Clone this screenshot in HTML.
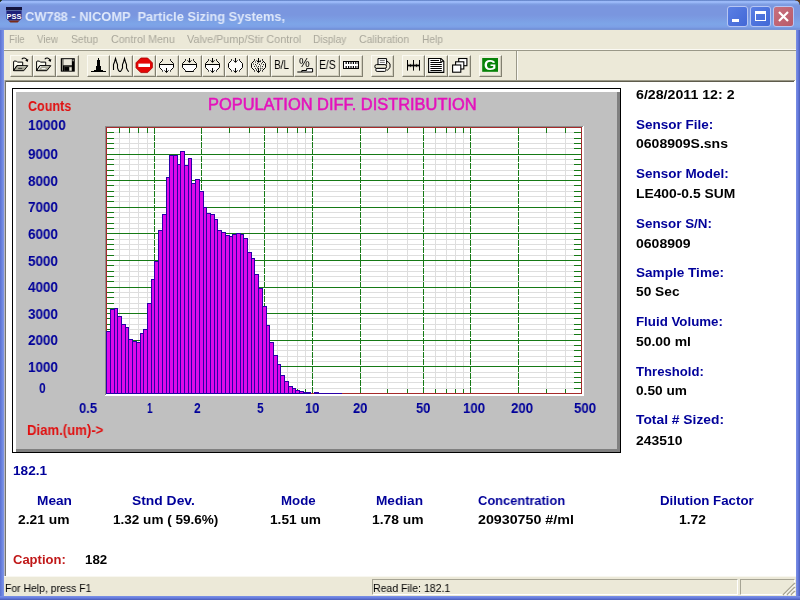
<!DOCTYPE html>
<html><head><meta charset="utf-8"><title>CW788</title><style>
html,body{margin:0;padding:0;}
body{width:800px;height:600px;overflow:hidden;position:relative;background:#fff;font-family:"Liberation Sans", sans-serif;}
.abs{position:absolute;}
.t{position:absolute;white-space:nowrap;line-height:normal;transform-origin:0 0;font-family:"Liberation Sans", sans-serif;will-change:transform;}
.btn{position:absolute;top:55px;width:23px;height:22px;box-sizing:border-box;background:#efecdd;
 border-top:1px solid #fbfaf2;border-left:1px solid #fbfaf2;border-right:1px solid #817f70;border-bottom:1px solid #817f70;
 box-shadow:inset -1px -1px 0 #d2cfbe;}
</style></head><body>
<div class="abs" style="left:0;top:0;width:800px;height:600px;background:#6f84dc;"></div>
<div class="abs" style="left:0;top:0;width:800px;height:30px;background:linear-gradient(#6888cc 0,#6c8cd0 0.6px,#9bb9f8 1.4px,#98b6f6 2.6px,#80a0e4 4px,#7a96df 6px,#7a96df 15px,#7da5e8 24px,#7da0e6 27px,#7090da 29px,#8298cc 30px);"></div>
<div class="abs" style="left:0;top:30px;width:4px;height:570px;background:linear-gradient(90deg,#5a70d0,#6c84e0 2px,#7f96e6);"></div>
<div class="abs" style="left:796px;top:30px;width:4px;height:570px;background:linear-gradient(90deg,#7c90e2,#657be0 2px,#4a5cb4);"></div>
<div class="abs" style="left:0;top:596px;width:800px;height:4px;background:linear-gradient(#7c92e4,#657be0 2px,#4a5cb4);"></div>
<div class="abs" style="left:0;top:0;width:3px;height:3px;background:radial-gradient(circle at 100% 100%,transparent 2.6px,#1c2a14 3px);"></div>
<div class="abs" style="left:795px;top:0;width:5px;height:5px;background:radial-gradient(circle at 0 100%,transparent 4.2px,#5a3a1c 5px);"></div>
<div class="abs" style="left:4px;top:30px;width:792px;height:52px;background:#ece9d8;"></div>
<div class="abs" style="left:4px;top:49px;width:792px;height:1px;background:#fbfaf4;"></div>
<div class="abs" style="left:4px;top:50px;width:792px;height:1px;background:#9a9888;"></div>
<div class="abs" style="left:516px;top:51px;width:1px;height:29px;background:#9a9888;"></div>
<div class="abs" style="left:517px;top:51px;width:1px;height:29px;background:#fbfaf4;"></div>
<div class="abs" style="left:4px;top:80px;width:792px;height:496px;background:#fff;"></div>
<div class="abs" style="left:4px;top:80px;width:791px;height:1px;background:#9a9886;"></div>
<div class="abs" style="left:4px;top:81px;width:790px;height:1px;background:#5e5c4c;"></div>
<div class="abs" style="left:4px;top:80px;width:1px;height:496px;background:#b8b8c8;"></div>
<div class="abs" style="left:5px;top:81px;width:1px;height:495px;background:#77766a;"></div>
<div class="abs" style="left:4px;top:576px;width:792px;height:20px;background:#ece9d8;"></div>
<div class="abs" style="left:4px;top:576px;width:792px;height:1px;background:#f8f7f0;"></div>
<div class="abs" style="left:372px;top:579px;width:366px;height:16px;box-sizing:border-box;border-top:1px solid #a6a494;border-left:1px solid #a6a494;border-right:1px solid #fff;border-bottom:1px solid #fff;"></div>
<div class="abs" style="left:740px;top:579px;width:55px;height:16px;box-sizing:border-box;border-top:1px solid #a6a494;border-left:1px solid #a6a494;border-right:1px solid #fff;border-bottom:1px solid #fff;"></div>
<svg class="abs" style="left:780px;top:580px" width="16" height="16"><path d="M15 3 L3 15 M15 7 L7 15 M15 11 L11 15" stroke="#a9a694" stroke-width="1.6"/><path d="M15 4.4 L4.4 15 M15 8.4 L8.4 15 M15 12.4 L12.4 15" stroke="#fff" stroke-width="1"/></svg>
<svg class="abs" style="left:5px;top:6.4px" width="18" height="18"><rect x="1" y="1" width="16" height="3.4" fill="#14143c"/><path d="M1.4 5 L16.6 5 L16.6 12.4 L14.6 14.6 L3.4 14.6 L1.4 12.4 Z" fill="#1e2078"/><path d="M3.4 14.6 L14.6 14.6 L12.6 16.6 L5.4 16.6 Z" fill="#7a2a18"/><text x="9" y="12.6" font-family="Liberation Sans, sans-serif" font-size="7.4" font-weight="bold" fill="#fff" text-anchor="middle">PSS</text></svg>
<div class="abs" style="left:727px;top:6px;width:21px;height:21px;box-sizing:border-box;border:1px solid #b7c6f3;border-radius:3px;background:linear-gradient(135deg,#5a7fe4,#4268d6);"></div><div class="abs" style="left:732px;top:19px;width:7px;height:3px;background:#fff;"></div>
<div class="abs" style="left:750px;top:6px;width:21px;height:21px;box-sizing:border-box;border:1px solid #b7c6f3;border-radius:3px;background:linear-gradient(135deg,#5a7fe4,#4268d6);"></div><div class="abs" style="left:755px;top:11px;width:11px;height:10px;box-sizing:border-box;border:1px solid #fff;border-top:3px solid #fff;"></div>
<div class="abs" style="left:773px;top:6px;width:21px;height:21px;box-sizing:border-box;border:1px solid #b7c6f3;border-radius:3px;background:linear-gradient(135deg,#c8707e,#b85a6a);"></div><svg class="abs" style="left:773px;top:6px" width="21" height="21"><path d="M6 6 L15 15 M15 6 L6 15" stroke="#fff" stroke-width="2.2"/></svg>
<div class="btn" style="left:10px"></div><div class="btn" style="left:33px"></div><div class="btn" style="left:56px"></div><div class="btn" style="left:87px"></div><div class="btn" style="left:110px"></div><div class="btn" style="left:133px"></div><div class="btn" style="left:156px"></div><div class="btn" style="left:179px"></div><div class="btn" style="left:202px"></div><div class="btn" style="left:225px"></div><div class="btn" style="left:248px"></div><div class="btn" style="left:271px"></div><div class="btn" style="left:294px"></div><div class="btn" style="left:317px"></div><div class="btn" style="left:340px"></div><div class="btn" style="left:371px"></div><div class="btn" style="left:402px"></div><div class="btn" style="left:425px"></div><div class="btn" style="left:448px"></div><div class="btn" style="left:479px"></div>
<svg class="abs" style="left:0;top:0" width="800" height="90"><g transform="translate(13,57)"><path d="M0.6 13.7 L0.6 4.5 L1 4.1 L3.4 4.1 L4.4 5.1 L9.7 5.1 L9.7 8.7 L3.8 8.7 Z" fill="#fffff4" stroke="#000" stroke-width="1"/><path d="M0.6 13.7 L3.9 8.7 L14.8 8.7 L10.8 13.7 Z" fill="#a6a695" stroke="#000" stroke-width="1"/><path d="M4.8 9.7 L12.8 9.7" stroke="#d8d8ca" stroke-width="0.8"/><path d="M8.8 2.2 C10 0.5 12.8 0.3 14 3.2" fill="none" stroke="#000" stroke-width="1.1"/><path d="M12.2 3.6 L14.7 4.9 L15.3 1.9 Z" fill="#000"/><path d="M5.2 11.4 L9.2 11.4" stroke="#333" stroke-width="1"/></g><g transform="translate(36,57)"><path d="M0.6 13.7 L0.6 4.5 L1 4.1 L3.4 4.1 L4.4 5.1 L9.7 5.1 L9.7 8.7 L3.8 8.7 Z" fill="#fffff4" stroke="#000" stroke-width="1"/><path d="M0.6 13.7 L3.9 8.7 L14.8 8.7 L10.8 13.7 Z" fill="#a6a695" stroke="#000" stroke-width="1"/><path d="M4.8 9.7 L12.8 9.7" stroke="#d8d8ca" stroke-width="0.8"/><path d="M8.8 2.2 C10 0.5 12.8 0.3 14 3.2" fill="none" stroke="#000" stroke-width="1.1"/><path d="M12.2 3.6 L14.7 4.9 L15.3 1.9 Z" fill="#000"/><path d="M2.4 12.6 L5 9" stroke="#fff" stroke-width="1"/><path d="M5.6 11.6 L9.6 11.6" stroke="#fff" stroke-width="1"/></g><g transform="translate(60.8,58.2) scale(0.97,0.96)"><rect x="0" y="0" width="14.4" height="14" fill="#000"/><rect x="2.6" y="1" width="8.8" height="6.4" fill="#e9e7da"/><rect x="1.2" y="1" width="1" height="12" fill="#8c8c80"/><rect x="12.2" y="1.4" width="1" height="1.8" fill="#e9e7da"/><rect x="3.4" y="8.8" width="8" height="4.4" fill="#8c8c80"/><rect x="3.6" y="9.2" width="5" height="4" fill="#000"/><rect x="9" y="9.6" width="2" height="3.2" fill="#e9e7da"/></g><rect x="98" y="58" width="1" height="2" fill="#000"/><rect x="97" y="60" width="3" height="6" fill="#000"/><rect x="96" y="66" width="5" height="4" fill="#000"/><rect x="94" y="70" width="9" height="1" fill="#000"/><rect x="91" y="71" width="15" height="1" fill="#000"/><path d="M113.5 70 L113.5 64.5 L114.5 62 L115.5 58.5 L116.5 62 L117.5 64.5 L117.5 68 L118.5 70.5 L119.5 71.5 L120.5 71.5 L121.5 70 L122.5 68 L122.5 64.5 L123.5 62 L124.5 58.5 L125.5 62 L126.5 64.5 L126.5 68 L127.5 70 L128.7 71.7" fill="none" stroke="#000" stroke-width="1.1"/><path d="M140.8 58 L147.6 58 L152.4 62.8 L152.4 67.8 L147.6 72.6 L140.8 72.6 L136 67.8 L136 62.8 Z" fill="#e40606" stroke="#a80000" stroke-width="0.8"/><rect x="138.4" y="63.6" width="11.6" height="3.4" fill="#fff"/><path d="M159.5 64.5 L159.5 67.5 L162.9 71.4 L170.1 71.4 L173.5 67.5 L173.5 64.5 Z" fill="#fdfdfd"/><path d="M162.5 59.2 L162.5 60.5 L159.5 63.5 L159.5 67.5 L162.5 70.5 L162.5 71.6" fill="none" stroke="#000" stroke-width="1"/><path d="M170.5 59.2 L170.5 60.5 L173.5 63.5 L173.5 67.5 L170.5 70.5 L170.5 71.6" fill="none" stroke="#000" stroke-width="1"/><path d="M159.5 64.5 L173.5 64.5" fill="none" stroke="#000" stroke-width="1"/><path d="M166.5 68 L166.5 72.6 M164.5 70.4 L166.5 72.4 L168.5 70.4" fill="none" stroke="#000" stroke-width="1"/><path d="M182.5 64.5 L182.5 67.5 L185.9 71.4 L193.1 71.4 L196.5 67.5 L196.5 64.5 Z" fill="#fdfdfd"/><path d="M185.5 59.2 L185.5 60.5 L182.5 63.5 L182.5 67.5 L185.5 70.5 L185.5 71.6" fill="none" stroke="#000" stroke-width="1"/><path d="M193.5 59.2 L193.5 60.5 L196.5 63.5 L196.5 67.5 L193.5 70.5 L193.5 71.6" fill="none" stroke="#000" stroke-width="1"/><path d="M182.5 64.5 L196.5 64.5" fill="none" stroke="#000" stroke-width="1"/><path d="M185.5 71.5 L193.5 71.5" fill="none" stroke="#000" stroke-width="1"/><path d="M189.5 58 L189.5 62.4 M187.5 60.3 L189.5 62.3 L191.5 60.3" fill="none" stroke="#000" stroke-width="1"/><path d="M205.5 64.5 L205.5 67.5 L208.9 71.4 L216.1 71.4 L219.5 67.5 L219.5 64.5 Z" fill="#fdfdfd"/><path d="M208.5 59.2 L208.5 60.5 L205.5 63.5 L205.5 67.5 L208.5 70.5 L208.5 71.6" fill="none" stroke="#000" stroke-width="1"/><path d="M216.5 59.2 L216.5 60.5 L219.5 63.5 L219.5 67.5 L216.5 70.5 L216.5 71.6" fill="none" stroke="#000" stroke-width="1"/><path d="M205.5 64.5 L219.5 64.5" fill="none" stroke="#000" stroke-width="1"/><path d="M212.5 58 L212.5 62.4 M210.5 60.3 L212.5 62.3 L214.5 60.3" fill="none" stroke="#000" stroke-width="1"/><path d="M212.5 68 L212.5 72.6 M210.5 70.4 L212.5 72.4 L214.5 70.4" fill="none" stroke="#000" stroke-width="1"/><path d="M231.5 60 L228.5 63.5 L228.5 67.5 L231.5 71 L239.5 71 L242.5 67.5 L242.5 63.5 L239.5 60 Z" fill="#fdfdfd"/><path d="M231.5 59.2 L231.5 60.5 L228.5 63.5 L228.5 67.5 L231.5 70.5 L231.5 71.6" fill="none" stroke="#000" stroke-width="1"/><path d="M239.5 59.2 L239.5 60.5 L242.5 63.5 L242.5 67.5 L239.5 70.5 L239.5 71.6" fill="none" stroke="#000" stroke-width="1"/><path d="M235.5 58 L235.5 62.4 M233.5 60.3 L235.5 62.3 L237.5 60.3" fill="none" stroke="#000" stroke-width="1"/><path d="M235.5 68 L235.5 72.6 M233.5 70.4 L235.5 72.4 L237.5 70.4" fill="none" stroke="#000" stroke-width="1"/><path d="M254.5 60 L251.5 63.5 L251.5 67.5 L254.5 71 L262.5 71 L265.5 67.5 L265.5 63.5 L262.5 60 Z" fill="#f4f2e8"/><path d="M254.5 59.2 L254.5 60.5 L251.5 63.5 L251.5 67.5 L254.5 70.5 L254.5 71.6" fill="none" stroke="#000" stroke-width="1"/><path d="M262.5 59.2 L262.5 60.5 L265.5 63.5 L265.5 67.5 L262.5 70.5 L262.5 71.6" fill="none" stroke="#000" stroke-width="1"/><path d="M258.5 58 L258.5 62.4 M256.5 60.3 L258.5 62.3 L260.5 60.3" fill="none" stroke="#000" stroke-width="1"/><path d="M258.5 68 L258.5 72.6 M256.5 70.4 L258.5 72.4 L260.5 70.4" fill="none" stroke="#000" stroke-width="1"/><rect x="255.0" y="61.5" width="1" height="1" fill="#111"/><rect x="257.0" y="60.9" width="1" height="1" fill="#111"/><rect x="260.0" y="61.1" width="1" height="1" fill="#111"/><rect x="262.0" y="61.9" width="1" height="1" fill="#111"/><rect x="253.0" y="63.5" width="1" height="1" fill="#111"/><rect x="255.0" y="64.1" width="1" height="1" fill="#111"/><rect x="257.0" y="63.1" width="1" height="1" fill="#111"/><rect x="259.0" y="63.9" width="1" height="1" fill="#111"/><rect x="261.0" y="63.3" width="1" height="1" fill="#111"/><rect x="263.0" y="64.1" width="1" height="1" fill="#111"/><rect x="254.0" y="65.9" width="1" height="1" fill="#111"/><rect x="256.0" y="65.5" width="1" height="1" fill="#111"/><rect x="258.0" y="66.1" width="1" height="1" fill="#111"/><rect x="260.0" y="65.5" width="1" height="1" fill="#111"/><rect x="262.0" y="66.1" width="1" height="1" fill="#111"/><rect x="255.0" y="67.9" width="1" height="1" fill="#111"/><rect x="257.0" y="67.5" width="1" height="1" fill="#111"/><rect x="260.0" y="67.7" width="1" height="1" fill="#111"/><rect x="261.6" y="68.1" width="1" height="1" fill="#111"/><rect x="256.0" y="69.3" width="1" height="1" fill="#111"/><rect x="260.0" y="69.5" width="1" height="1" fill="#111"/><path d="M297.3 72 L301.8 72 L301.8 70.5 L306.6 70.5 L306.6 68.6 L312.6 68.6 L312.6 72 L301.8 72" fill="#fdfdfd" stroke="#000" stroke-width="1"/><rect x="343.5" y="61.5" width="15" height="7" fill="#fff" stroke="#000" stroke-width="1"/><rect x="345.6" y="62" width="1.2" height="2" fill="#000"/><rect x="345.6" y="66" width="1.2" height="2" fill="#000"/><rect x="348.0" y="62" width="1.2" height="2" fill="#000"/><rect x="348.0" y="66" width="1.2" height="2" fill="#000"/><rect x="350.4" y="62" width="1.2" height="2" fill="#000"/><rect x="350.4" y="66" width="1.2" height="2" fill="#000"/><rect x="352.8" y="62" width="1.2" height="2" fill="#000"/><rect x="352.8" y="66" width="1.2" height="2" fill="#000"/><rect x="355.2" y="62" width="1.2" height="2" fill="#000"/><rect x="355.2" y="66" width="1.2" height="2" fill="#000"/><rect x="357.6" y="62" width="1.2" height="2" fill="#000"/><rect x="357.6" y="66" width="1.2" height="2" fill="#000"/><g transform="translate(374.4,58)"><path d="M3.6 6.6 L3.6 0.6 L12.2 0.6 L12.2 6.6" fill="#fff" stroke="#000" stroke-width="1"/><path d="M5.4 2.5 L10.4 2.5 M5.4 4.4 L10.4 4.4" stroke="#666" stroke-width="0.9"/><rect x="0.5" y="6.6" width="11.6" height="3.8" rx="1.6" fill="#ecead8" stroke="#000" stroke-width="1"/><rect x="1.4" y="10.4" width="10.2" height="3" rx="1.3" fill="#fff" stroke="#000" stroke-width="1"/><path d="M12.4 3.6 L13.6 3.6 L15.6 6 L15.6 9.6 L12.8 12.4" fill="none" stroke="#000" stroke-width="1"/></g><rect x="407" y="60" width="1" height="10.6" fill="#000"/><rect x="413" y="60" width="1" height="10.6" fill="#000"/><rect x="419" y="60" width="1" height="10.6" fill="#000"/><rect x="407" y="65" width="13" height="1" fill="#000"/><rect x="408.6" y="63.9" width="0.8" height="3.2" fill="#000"/><rect x="410.1" y="63.9" width="0.8" height="3.2" fill="#000"/><rect x="411.6" y="63.9" width="0.8" height="3.2" fill="#000"/><rect x="414.6" y="63.9" width="0.8" height="3.2" fill="#000"/><rect x="416.1" y="63.9" width="0.8" height="3.2" fill="#000"/><rect x="417.6" y="63.9" width="0.8" height="3.2" fill="#000"/><path d="M428.6 58.5 L441 58.5 L443.8 61.3 L443.8 72.4 L428.6 72.4 Z" fill="#fff" stroke="#000" stroke-width="1.1"/><path d="M440.6 58.5 L440.6 61.6 L443.8 61.6" fill="none" stroke="#000" stroke-width="0.9"/><rect x="430.4" y="60" width="8.6" height="1" fill="#000"/><rect x="430.4" y="62" width="11.4" height="1" fill="#000"/><rect x="430.4" y="64" width="11.4" height="1" fill="#000"/><rect x="430.4" y="66" width="11.4" height="1" fill="#000"/><rect x="430.4" y="68" width="11.4" height="1" fill="#000"/><rect x="430.4" y="70" width="11.4" height="1" fill="#000"/><rect x="458.7" y="58.5" width="8.2" height="7.2" fill="#fff" stroke="#000" stroke-width="1.1"/><rect x="455.6" y="61.8" width="8.2" height="7.2" fill="#fff" stroke="#000" stroke-width="1.1"/><rect x="452.6" y="65" width="8.2" height="7.2" fill="#fff" stroke="#000" stroke-width="1.1"/><rect x="482.2" y="58" width="15.8" height="13.8" fill="#078207"/></svg>
<div class="abs" style="left:12px;top:88px;width:609px;height:365px;background:#000;"></div>
<div class="abs" style="left:13px;top:89px;width:607px;height:363px;background:#fff;"></div>
<div class="abs" style="left:16px;top:92px;width:604px;height:360px;background:#808080;"></div>
<div class="abs" style="left:16px;top:92px;width:601px;height:357px;background:#c0c0c0;"></div>
<svg class="abs" style="left:0;top:0" width="800" height="600" shape-rendering="crispEdges"><rect x="105" y="126" width="479" height="270" fill="#ffffff"/><rect x="105" y="126" width="478" height="1" fill="#8c8c8c"/><rect x="105" y="126" width="1" height="269" fill="#8c8c8c"/><rect x="107" y="388" width="474" height="1" fill="#dedede"/><rect x="107" y="382" width="474" height="1" fill="#dedede"/><rect x="107" y="377" width="474" height="1" fill="#dedede"/><rect x="107" y="372" width="474" height="1" fill="#dedede"/><rect x="107" y="361" width="474" height="1" fill="#dedede"/><rect x="107" y="356" width="474" height="1" fill="#dedede"/><rect x="107" y="350" width="474" height="1" fill="#dedede"/><rect x="107" y="345" width="474" height="1" fill="#dedede"/><rect x="107" y="334" width="474" height="1" fill="#dedede"/><rect x="107" y="329" width="474" height="1" fill="#dedede"/><rect x="107" y="324" width="474" height="1" fill="#dedede"/><rect x="107" y="318" width="474" height="1" fill="#dedede"/><rect x="107" y="308" width="474" height="1" fill="#dedede"/><rect x="107" y="303" width="474" height="1" fill="#dedede"/><rect x="107" y="297" width="474" height="1" fill="#dedede"/><rect x="107" y="292" width="474" height="1" fill="#dedede"/><rect x="107" y="281" width="474" height="1" fill="#dedede"/><rect x="107" y="276" width="474" height="1" fill="#dedede"/><rect x="107" y="271" width="474" height="1" fill="#dedede"/><rect x="107" y="265" width="474" height="1" fill="#dedede"/><rect x="107" y="255" width="474" height="1" fill="#dedede"/><rect x="107" y="249" width="474" height="1" fill="#dedede"/><rect x="107" y="244" width="474" height="1" fill="#dedede"/><rect x="107" y="239" width="474" height="1" fill="#dedede"/><rect x="107" y="228" width="474" height="1" fill="#dedede"/><rect x="107" y="223" width="474" height="1" fill="#dedede"/><rect x="107" y="217" width="474" height="1" fill="#dedede"/><rect x="107" y="212" width="474" height="1" fill="#dedede"/><rect x="107" y="201" width="474" height="1" fill="#dedede"/><rect x="107" y="196" width="474" height="1" fill="#dedede"/><rect x="107" y="191" width="474" height="1" fill="#dedede"/><rect x="107" y="185" width="474" height="1" fill="#dedede"/><rect x="107" y="175" width="474" height="1" fill="#dedede"/><rect x="107" y="170" width="474" height="1" fill="#dedede"/><rect x="107" y="164" width="474" height="1" fill="#dedede"/><rect x="107" y="159" width="474" height="1" fill="#dedede"/><rect x="107" y="148" width="474" height="1" fill="#dedede"/><rect x="107" y="143" width="474" height="1" fill="#dedede"/><rect x="107" y="138" width="474" height="1" fill="#dedede"/><rect x="107" y="132" width="474" height="1" fill="#dedede"/><rect x="119" y="128" width="1" height="265" fill="#dedede"/><rect x="129" y="128" width="1" height="265" fill="#dedede"/><rect x="138" y="128" width="1" height="265" fill="#dedede"/><rect x="147" y="128" width="1" height="265" fill="#dedede"/><rect x="229" y="128" width="1" height="265" fill="#dedede"/><rect x="249" y="128" width="1" height="265" fill="#dedede"/><rect x="277" y="128" width="1" height="265" fill="#dedede"/><rect x="287" y="128" width="1" height="265" fill="#dedede"/><rect x="297" y="128" width="1" height="265" fill="#dedede"/><rect x="305" y="128" width="1" height="265" fill="#dedede"/><rect x="387" y="128" width="1" height="265" fill="#dedede"/><rect x="407" y="128" width="1" height="265" fill="#dedede"/><rect x="435" y="128" width="1" height="265" fill="#dedede"/><rect x="446" y="128" width="1" height="265" fill="#dedede"/><rect x="455" y="128" width="1" height="265" fill="#dedede"/><rect x="463" y="128" width="1" height="265" fill="#dedede"/><rect x="546" y="128" width="1" height="265" fill="#dedede"/><rect x="565" y="128" width="1" height="265" fill="#dedede"/><rect x="107" y="366" width="474" height="1" fill="#167a16"/><rect x="107" y="340" width="474" height="1" fill="#167a16"/><rect x="107" y="313" width="474" height="1" fill="#167a16"/><rect x="107" y="287" width="474" height="1" fill="#167a16"/><rect x="107" y="260" width="474" height="1" fill="#167a16"/><rect x="107" y="233" width="474" height="1" fill="#167a16"/><rect x="107" y="207" width="474" height="1" fill="#167a16"/><rect x="107" y="180" width="474" height="1" fill="#167a16"/><rect x="107" y="154" width="474" height="1" fill="#167a16"/><rect x="107" y="388" width="7" height="1" fill="#167a16"/><rect x="574" y="388" width="7" height="1" fill="#167a16"/><rect x="107" y="382" width="7" height="1" fill="#167a16"/><rect x="574" y="382" width="7" height="1" fill="#167a16"/><rect x="107" y="377" width="7" height="1" fill="#167a16"/><rect x="574" y="377" width="7" height="1" fill="#167a16"/><rect x="107" y="372" width="7" height="1" fill="#167a16"/><rect x="574" y="372" width="7" height="1" fill="#167a16"/><rect x="107" y="361" width="7" height="1" fill="#167a16"/><rect x="574" y="361" width="7" height="1" fill="#167a16"/><rect x="107" y="356" width="7" height="1" fill="#167a16"/><rect x="574" y="356" width="7" height="1" fill="#167a16"/><rect x="107" y="350" width="7" height="1" fill="#167a16"/><rect x="574" y="350" width="7" height="1" fill="#167a16"/><rect x="107" y="345" width="7" height="1" fill="#167a16"/><rect x="574" y="345" width="7" height="1" fill="#167a16"/><rect x="107" y="334" width="7" height="1" fill="#167a16"/><rect x="574" y="334" width="7" height="1" fill="#167a16"/><rect x="107" y="329" width="7" height="1" fill="#167a16"/><rect x="574" y="329" width="7" height="1" fill="#167a16"/><rect x="107" y="324" width="7" height="1" fill="#167a16"/><rect x="574" y="324" width="7" height="1" fill="#167a16"/><rect x="107" y="318" width="7" height="1" fill="#167a16"/><rect x="574" y="318" width="7" height="1" fill="#167a16"/><rect x="107" y="308" width="7" height="1" fill="#167a16"/><rect x="574" y="308" width="7" height="1" fill="#167a16"/><rect x="107" y="303" width="7" height="1" fill="#167a16"/><rect x="574" y="303" width="7" height="1" fill="#167a16"/><rect x="107" y="297" width="7" height="1" fill="#167a16"/><rect x="574" y="297" width="7" height="1" fill="#167a16"/><rect x="107" y="292" width="7" height="1" fill="#167a16"/><rect x="574" y="292" width="7" height="1" fill="#167a16"/><rect x="107" y="281" width="7" height="1" fill="#167a16"/><rect x="574" y="281" width="7" height="1" fill="#167a16"/><rect x="107" y="276" width="7" height="1" fill="#167a16"/><rect x="574" y="276" width="7" height="1" fill="#167a16"/><rect x="107" y="271" width="7" height="1" fill="#167a16"/><rect x="574" y="271" width="7" height="1" fill="#167a16"/><rect x="107" y="265" width="7" height="1" fill="#167a16"/><rect x="574" y="265" width="7" height="1" fill="#167a16"/><rect x="107" y="255" width="7" height="1" fill="#167a16"/><rect x="574" y="255" width="7" height="1" fill="#167a16"/><rect x="107" y="249" width="7" height="1" fill="#167a16"/><rect x="574" y="249" width="7" height="1" fill="#167a16"/><rect x="107" y="244" width="7" height="1" fill="#167a16"/><rect x="574" y="244" width="7" height="1" fill="#167a16"/><rect x="107" y="239" width="7" height="1" fill="#167a16"/><rect x="574" y="239" width="7" height="1" fill="#167a16"/><rect x="107" y="228" width="7" height="1" fill="#167a16"/><rect x="574" y="228" width="7" height="1" fill="#167a16"/><rect x="107" y="223" width="7" height="1" fill="#167a16"/><rect x="574" y="223" width="7" height="1" fill="#167a16"/><rect x="107" y="217" width="7" height="1" fill="#167a16"/><rect x="574" y="217" width="7" height="1" fill="#167a16"/><rect x="107" y="212" width="7" height="1" fill="#167a16"/><rect x="574" y="212" width="7" height="1" fill="#167a16"/><rect x="107" y="201" width="7" height="1" fill="#167a16"/><rect x="574" y="201" width="7" height="1" fill="#167a16"/><rect x="107" y="196" width="7" height="1" fill="#167a16"/><rect x="574" y="196" width="7" height="1" fill="#167a16"/><rect x="107" y="191" width="7" height="1" fill="#167a16"/><rect x="574" y="191" width="7" height="1" fill="#167a16"/><rect x="107" y="185" width="7" height="1" fill="#167a16"/><rect x="574" y="185" width="7" height="1" fill="#167a16"/><rect x="107" y="175" width="7" height="1" fill="#167a16"/><rect x="574" y="175" width="7" height="1" fill="#167a16"/><rect x="107" y="170" width="7" height="1" fill="#167a16"/><rect x="574" y="170" width="7" height="1" fill="#167a16"/><rect x="107" y="164" width="7" height="1" fill="#167a16"/><rect x="574" y="164" width="7" height="1" fill="#167a16"/><rect x="107" y="159" width="7" height="1" fill="#167a16"/><rect x="574" y="159" width="7" height="1" fill="#167a16"/><rect x="107" y="148" width="7" height="1" fill="#167a16"/><rect x="574" y="148" width="7" height="1" fill="#167a16"/><rect x="107" y="143" width="7" height="1" fill="#167a16"/><rect x="574" y="143" width="7" height="1" fill="#167a16"/><rect x="107" y="138" width="7" height="1" fill="#167a16"/><rect x="574" y="138" width="7" height="1" fill="#167a16"/><rect x="107" y="132" width="7" height="1" fill="#167a16"/><rect x="574" y="132" width="7" height="1" fill="#167a16"/><rect x="119" y="128" width="1" height="5" fill="#167a16"/><rect x="119" y="389" width="1" height="4" fill="#167a16"/><rect x="129" y="128" width="1" height="5" fill="#167a16"/><rect x="129" y="389" width="1" height="4" fill="#167a16"/><rect x="138" y="128" width="1" height="5" fill="#167a16"/><rect x="138" y="389" width="1" height="4" fill="#167a16"/><rect x="147" y="128" width="1" height="5" fill="#167a16"/><rect x="147" y="389" width="1" height="4" fill="#167a16"/><rect x="229" y="128" width="1" height="5" fill="#167a16"/><rect x="229" y="389" width="1" height="4" fill="#167a16"/><rect x="249" y="128" width="1" height="5" fill="#167a16"/><rect x="249" y="389" width="1" height="4" fill="#167a16"/><rect x="277" y="128" width="1" height="5" fill="#167a16"/><rect x="277" y="389" width="1" height="4" fill="#167a16"/><rect x="287" y="128" width="1" height="5" fill="#167a16"/><rect x="287" y="389" width="1" height="4" fill="#167a16"/><rect x="297" y="128" width="1" height="5" fill="#167a16"/><rect x="297" y="389" width="1" height="4" fill="#167a16"/><rect x="305" y="128" width="1" height="5" fill="#167a16"/><rect x="305" y="389" width="1" height="4" fill="#167a16"/><rect x="387" y="128" width="1" height="5" fill="#167a16"/><rect x="387" y="389" width="1" height="4" fill="#167a16"/><rect x="407" y="128" width="1" height="5" fill="#167a16"/><rect x="407" y="389" width="1" height="4" fill="#167a16"/><rect x="435" y="128" width="1" height="5" fill="#167a16"/><rect x="435" y="389" width="1" height="4" fill="#167a16"/><rect x="446" y="128" width="1" height="5" fill="#167a16"/><rect x="446" y="389" width="1" height="4" fill="#167a16"/><rect x="455" y="128" width="1" height="5" fill="#167a16"/><rect x="455" y="389" width="1" height="4" fill="#167a16"/><rect x="463" y="128" width="1" height="5" fill="#167a16"/><rect x="463" y="389" width="1" height="4" fill="#167a16"/><rect x="546" y="128" width="1" height="5" fill="#167a16"/><rect x="546" y="389" width="1" height="4" fill="#167a16"/><rect x="565" y="128" width="1" height="5" fill="#167a16"/><rect x="565" y="389" width="1" height="4" fill="#167a16"/><line x1="154.5" y1="128" x2="154.5" y2="393" stroke="#167a16" stroke-width="1" stroke-dasharray="6 1"/><line x1="201.5" y1="128" x2="201.5" y2="393" stroke="#167a16" stroke-width="1" stroke-dasharray="6 1"/><line x1="264.5" y1="128" x2="264.5" y2="393" stroke="#167a16" stroke-width="1" stroke-dasharray="6 1"/><line x1="312.5" y1="128" x2="312.5" y2="393" stroke="#167a16" stroke-width="1" stroke-dasharray="6 1"/><line x1="360.5" y1="128" x2="360.5" y2="393" stroke="#167a16" stroke-width="1" stroke-dasharray="6 1"/><line x1="423.5" y1="128" x2="423.5" y2="393" stroke="#167a16" stroke-width="1" stroke-dasharray="6 1"/><line x1="470.5" y1="128" x2="470.5" y2="393" stroke="#167a16" stroke-width="1" stroke-dasharray="6 1"/><line x1="518.5" y1="128" x2="518.5" y2="393" stroke="#167a16" stroke-width="1" stroke-dasharray="6 1"/><rect x="106" y="127" width="476" height="1" fill="#a62a2a"/><rect x="106" y="127" width="1" height="267" fill="#a62a2a"/><rect x="581" y="127" width="1" height="267" fill="#a62a2a"/><rect x="106" y="393" width="476" height="1" fill="#a62a2a"/><rect x="106" y="331" width="5" height="63" fill="#2a00a8"/><rect x="107" y="332" width="3" height="61" fill="#de0ae9"/><rect x="110" y="309" width="5" height="85" fill="#2a00a8"/><rect x="111" y="310" width="3" height="83" fill="#de0ae9"/><rect x="114" y="308" width="4" height="86" fill="#2a00a8"/><rect x="115" y="309" width="2" height="84" fill="#de0ae9"/><rect x="117" y="316" width="5" height="78" fill="#2a00a8"/><rect x="118" y="317" width="3" height="76" fill="#de0ae9"/><rect x="121" y="324" width="5" height="70" fill="#2a00a8"/><rect x="122" y="325" width="3" height="68" fill="#de0ae9"/><rect x="125" y="327" width="4" height="67" fill="#2a00a8"/><rect x="126" y="328" width="2" height="65" fill="#de0ae9"/><rect x="128" y="339" width="5" height="55" fill="#2a00a8"/><rect x="129" y="340" width="3" height="53" fill="#de0ae9"/><rect x="132" y="341" width="5" height="53" fill="#2a00a8"/><rect x="133" y="342" width="3" height="51" fill="#de0ae9"/><rect x="136" y="342" width="5" height="52" fill="#2a00a8"/><rect x="137" y="343" width="3" height="50" fill="#de0ae9"/><rect x="140" y="333" width="4" height="61" fill="#2a00a8"/><rect x="141" y="334" width="2" height="59" fill="#de0ae9"/><rect x="143" y="329" width="5" height="65" fill="#2a00a8"/><rect x="144" y="330" width="3" height="63" fill="#de0ae9"/><rect x="147" y="303" width="5" height="91" fill="#2a00a8"/><rect x="148" y="304" width="3" height="89" fill="#de0ae9"/><rect x="151" y="279" width="4" height="115" fill="#2a00a8"/><rect x="152" y="280" width="2" height="113" fill="#de0ae9"/><rect x="154" y="261" width="5" height="133" fill="#2a00a8"/><rect x="155" y="262" width="3" height="131" fill="#de0ae9"/><rect x="158" y="230" width="5" height="164" fill="#2a00a8"/><rect x="159" y="231" width="3" height="162" fill="#de0ae9"/><rect x="162" y="214" width="5" height="180" fill="#2a00a8"/><rect x="163" y="215" width="3" height="178" fill="#de0ae9"/><rect x="166" y="177" width="4" height="217" fill="#2a00a8"/><rect x="167" y="178" width="2" height="215" fill="#de0ae9"/><rect x="169" y="155" width="5" height="239" fill="#2a00a8"/><rect x="170" y="156" width="3" height="237" fill="#de0ae9"/><rect x="173" y="155" width="5" height="239" fill="#2a00a8"/><rect x="174" y="156" width="3" height="237" fill="#de0ae9"/><rect x="177" y="164" width="4" height="230" fill="#2a00a8"/><rect x="178" y="165" width="2" height="228" fill="#de0ae9"/><rect x="180" y="151" width="5" height="243" fill="#2a00a8"/><rect x="181" y="152" width="3" height="241" fill="#de0ae9"/><rect x="184" y="165" width="5" height="229" fill="#2a00a8"/><rect x="185" y="166" width="3" height="227" fill="#de0ae9"/><rect x="188" y="158" width="4" height="236" fill="#2a00a8"/><rect x="189" y="159" width="2" height="234" fill="#de0ae9"/><rect x="191" y="183" width="5" height="211" fill="#2a00a8"/><rect x="192" y="184" width="3" height="209" fill="#de0ae9"/><rect x="195" y="179" width="5" height="215" fill="#2a00a8"/><rect x="196" y="180" width="3" height="213" fill="#de0ae9"/><rect x="199" y="191" width="5" height="203" fill="#2a00a8"/><rect x="200" y="192" width="3" height="201" fill="#de0ae9"/><rect x="203" y="207" width="4" height="187" fill="#2a00a8"/><rect x="204" y="208" width="2" height="185" fill="#de0ae9"/><rect x="206" y="213" width="5" height="181" fill="#2a00a8"/><rect x="207" y="214" width="3" height="179" fill="#de0ae9"/><rect x="210" y="214" width="5" height="180" fill="#2a00a8"/><rect x="211" y="215" width="3" height="178" fill="#de0ae9"/><rect x="214" y="219" width="4" height="175" fill="#2a00a8"/><rect x="215" y="220" width="2" height="173" fill="#de0ae9"/><rect x="217" y="230" width="5" height="164" fill="#2a00a8"/><rect x="218" y="231" width="3" height="162" fill="#de0ae9"/><rect x="221" y="232" width="5" height="162" fill="#2a00a8"/><rect x="222" y="233" width="3" height="160" fill="#de0ae9"/><rect x="225" y="235" width="5" height="159" fill="#2a00a8"/><rect x="226" y="236" width="3" height="157" fill="#de0ae9"/><rect x="229" y="236" width="4" height="158" fill="#2a00a8"/><rect x="230" y="237" width="2" height="156" fill="#de0ae9"/><rect x="232" y="234" width="5" height="160" fill="#2a00a8"/><rect x="233" y="235" width="3" height="158" fill="#de0ae9"/><rect x="236" y="233" width="5" height="161" fill="#2a00a8"/><rect x="237" y="234" width="3" height="159" fill="#de0ae9"/><rect x="240" y="234" width="4" height="160" fill="#2a00a8"/><rect x="241" y="235" width="2" height="158" fill="#de0ae9"/><rect x="243" y="238" width="5" height="156" fill="#2a00a8"/><rect x="244" y="239" width="3" height="154" fill="#de0ae9"/><rect x="247" y="252" width="5" height="142" fill="#2a00a8"/><rect x="248" y="253" width="3" height="140" fill="#de0ae9"/><rect x="251" y="258" width="4" height="136" fill="#2a00a8"/><rect x="252" y="259" width="2" height="134" fill="#de0ae9"/><rect x="254" y="274" width="5" height="120" fill="#2a00a8"/><rect x="255" y="275" width="3" height="118" fill="#de0ae9"/><rect x="258" y="288" width="5" height="106" fill="#2a00a8"/><rect x="259" y="289" width="3" height="104" fill="#de0ae9"/><rect x="262" y="306" width="5" height="88" fill="#2a00a8"/><rect x="263" y="307" width="3" height="86" fill="#de0ae9"/><rect x="266" y="325" width="4" height="69" fill="#2a00a8"/><rect x="267" y="326" width="2" height="67" fill="#de0ae9"/><rect x="269" y="342" width="5" height="52" fill="#2a00a8"/><rect x="270" y="343" width="3" height="50" fill="#de0ae9"/><rect x="273" y="355" width="5" height="39" fill="#2a00a8"/><rect x="274" y="356" width="3" height="37" fill="#de0ae9"/><rect x="277" y="364" width="4" height="30" fill="#2a00a8"/><rect x="278" y="365" width="2" height="28" fill="#de0ae9"/><rect x="280" y="375" width="5" height="19" fill="#2a00a8"/><rect x="281" y="376" width="3" height="17" fill="#de0ae9"/><rect x="284" y="381" width="5" height="13" fill="#2a00a8"/><rect x="285" y="382" width="3" height="11" fill="#de0ae9"/><rect x="288" y="386" width="5" height="8" fill="#2a00a8"/><rect x="289" y="387" width="3" height="6" fill="#de0ae9"/><rect x="292" y="388" width="4" height="6" fill="#2a00a8"/><rect x="293" y="389" width="2" height="4" fill="#de0ae9"/><rect x="295" y="390" width="5" height="4" fill="#2a00a8"/><rect x="296" y="391" width="3" height="2" fill="#de0ae9"/><rect x="299" y="391" width="5" height="3" fill="#2a00a8"/><rect x="300" y="392" width="3" height="1" fill="#de0ae9"/><rect x="303" y="392" width="5" height="2" fill="#2a00a8"/><rect x="307" y="392" width="4" height="2" fill="#2a00a8"/><rect x="314" y="392" width="5" height="2" fill="#2a00a8"/><rect x="314" y="393" width="28" height="1" fill="#2a00a8"/></svg>
<div class="t" style="left:25.20px;top:9.40px;font-size:13px;font-weight:bold;color:#dfe8fa;transform:scaleX(0.9872);white-space:pre;">CW788 - NICOMP  Particle Sizing Systems,</div>
<div class="t" style="left:8.80px;top:33.00px;font-size:11px;font-weight:normal;color:#a9a79b;transform:scaleX(0.8860);">File</div>
<div class="t" style="left:37.40px;top:33.00px;font-size:11px;font-weight:normal;color:#a9a79b;transform:scaleX(0.8861);">View</div>
<div class="t" style="left:71.40px;top:33.00px;font-size:11px;font-weight:normal;color:#a9a79b;transform:scaleX(0.9431);">Setup</div>
<div class="t" style="left:110.80px;top:33.00px;font-size:11px;font-weight:normal;color:#a9a79b;transform:scaleX(0.9649);">Control Menu</div>
<div class="t" style="left:187.00px;top:33.00px;font-size:11px;font-weight:normal;color:#a9a79b;transform:scaleX(0.9800);">Valve/Pump/Stir Control</div>
<div class="t" style="left:313.00px;top:33.00px;font-size:11px;font-weight:normal;color:#a9a79b;transform:scaleX(0.9243);">Display</div>
<div class="t" style="left:358.80px;top:33.00px;font-size:11px;font-weight:normal;color:#a9a79b;transform:scaleX(0.9530);">Calibration</div>
<div class="t" style="left:422.00px;top:33.00px;font-size:11px;font-weight:normal;color:#a9a79b;transform:scaleX(0.9242);">Help</div>
<div class="t" style="left:28.00px;top:98.00px;font-size:14px;font-weight:bold;color:#e01010;transform:scaleX(0.8962);">Counts</div>
<div class="t" style="left:27.60px;top:117.00px;font-size:14px;font-weight:bold;color:#00009a;transform:scaleX(0.9682);">10000</div>
<div class="t" style="left:27.60px;top:146.00px;font-size:14px;font-weight:bold;color:#00009a;transform:scaleX(0.9631);">9000</div>
<div class="t" style="left:27.60px;top:173.00px;font-size:14px;font-weight:bold;color:#00009a;transform:scaleX(0.9631);">8000</div>
<div class="t" style="left:27.60px;top:199.00px;font-size:14px;font-weight:bold;color:#00009a;transform:scaleX(0.9631);">7000</div>
<div class="t" style="left:27.60px;top:226.00px;font-size:14px;font-weight:bold;color:#00009a;transform:scaleX(0.9631);">6000</div>
<div class="t" style="left:27.60px;top:253.00px;font-size:14px;font-weight:bold;color:#00009a;transform:scaleX(0.9631);">5000</div>
<div class="t" style="left:27.60px;top:279.00px;font-size:14px;font-weight:bold;color:#00009a;transform:scaleX(0.9631);">4000</div>
<div class="t" style="left:27.60px;top:306.00px;font-size:14px;font-weight:bold;color:#00009a;transform:scaleX(0.9631);">3000</div>
<div class="t" style="left:27.60px;top:332.00px;font-size:14px;font-weight:bold;color:#00009a;transform:scaleX(0.9631);">2000</div>
<div class="t" style="left:27.60px;top:359.00px;font-size:14px;font-weight:bold;color:#00009a;transform:scaleX(0.9631);">1000</div>
<div class="t" style="left:39.00px;top:380.00px;font-size:14px;font-weight:bold;color:#00009a;transform:scaleX(0.8625);">0</div>
<div class="t" style="left:207.87px;top:95.60px;font-size:16px;font-weight:normal;color:#e412bc;transform:scaleX(1.0254);-webkit-text-stroke:0.5px #e412bc;">POPULATION DIFF. DISTRIBUTION</div>
<div class="t" style="left:27.20px;top:422.00px;font-size:14px;font-weight:bold;color:#e01010;transform:scaleX(0.9395);">Diam.(um)-&gt;</div>
<div class="t" style="left:79.20px;top:399.60px;font-size:14px;font-weight:bold;color:#00009a;transform:scaleX(0.9250);">0.5</div>
<div class="t" style="left:147.20px;top:399.60px;font-size:14px;font-weight:bold;color:#00009a;transform:scaleX(0.6875);">1</div>
<div class="t" style="left:193.60px;top:399.60px;font-size:14px;font-weight:bold;color:#00009a;transform:scaleX(0.8625);">2</div>
<div class="t" style="left:256.60px;top:399.60px;font-size:14px;font-weight:bold;color:#00009a;transform:scaleX(0.8625);">5</div>
<div class="t" style="left:304.60px;top:399.60px;font-size:14px;font-weight:bold;color:#00009a;transform:scaleX(0.9249);">10</div>
<div class="t" style="left:352.60px;top:399.60px;font-size:14px;font-weight:bold;color:#00009a;transform:scaleX(0.9249);">20</div>
<div class="t" style="left:415.60px;top:399.60px;font-size:14px;font-weight:bold;color:#00009a;transform:scaleX(0.9249);">50</div>
<div class="t" style="left:462.60px;top:399.60px;font-size:14px;font-weight:bold;color:#00009a;transform:scaleX(0.9460);">100</div>
<div class="t" style="left:510.60px;top:399.60px;font-size:14px;font-weight:bold;color:#00009a;transform:scaleX(0.9460);">200</div>
<div class="t" style="left:573.60px;top:399.60px;font-size:14px;font-weight:bold;color:#00009a;transform:scaleX(0.9460);">500</div>
<div class="t" style="left:636.20px;top:87.20px;font-size:13px;font-weight:bold;color:#000;transform:scaleX(1.0907);">6/28/2011 12: 2</div>
<div class="t" style="left:636.20px;top:116.60px;font-size:13px;font-weight:bold;color:#00009a;transform:scaleX(1.0394);">Sensor File:</div>
<div class="t" style="left:636.20px;top:136.00px;font-size:13px;font-weight:bold;color:#000;transform:scaleX(1.0780);">0608909S.sns</div>
<div class="t" style="left:636.20px;top:165.70px;font-size:13px;font-weight:bold;color:#00009a;transform:scaleX(1.0355);">Sensor Model:</div>
<div class="t" style="left:636.20px;top:185.50px;font-size:13px;font-weight:bold;color:#000;transform:scaleX(1.0642);">LE400-0.5 SUM</div>
<div class="t" style="left:636.20px;top:215.70px;font-size:13px;font-weight:bold;color:#00009a;transform:scaleX(1.0306);">Sensor S/N:</div>
<div class="t" style="left:636.20px;top:235.50px;font-size:13px;font-weight:bold;color:#000;transform:scaleX(1.0778);">0608909</div>
<div class="t" style="left:636.20px;top:264.50px;font-size:13px;font-weight:bold;color:#00009a;transform:scaleX(1.0445);">Sample Time:</div>
<div class="t" style="left:636.20px;top:284.30px;font-size:13px;font-weight:bold;color:#000;transform:scaleX(1.0568);">50 Sec</div>
<div class="t" style="left:636.20px;top:314.00px;font-size:13px;font-weight:bold;color:#00009a;transform:scaleX(1.0231);">Fluid Volume:</div>
<div class="t" style="left:636.20px;top:333.50px;font-size:13px;font-weight:bold;color:#000;transform:scaleX(1.0710);">50.00 ml</div>
<div class="t" style="left:636.20px;top:363.60px;font-size:13px;font-weight:bold;color:#00009a;transform:scaleX(1.0099);">Threshold:</div>
<div class="t" style="left:636.20px;top:383.40px;font-size:13px;font-weight:bold;color:#000;transform:scaleX(1.0511);">0.50 um</div>
<div class="t" style="left:636.20px;top:412.40px;font-size:13px;font-weight:bold;color:#00009a;transform:scaleX(1.0631);">Total # Sized:</div>
<div class="t" style="left:636.20px;top:433.00px;font-size:13px;font-weight:bold;color:#000;transform:scaleX(1.0707);">243510</div>
<div class="t" style="left:13.00px;top:462.50px;font-size:13px;font-weight:bold;color:#00009a;transform:scaleX(1.0464);">182.1</div>
<div class="t" style="left:37.00px;top:492.50px;font-size:13px;font-weight:bold;color:#00009a;transform:scaleX(1.0514);">Mean</div>
<div class="t" style="left:18.10px;top:511.50px;font-size:13px;font-weight:bold;color:#000;transform:scaleX(1.0636);">2.21 um</div>
<div class="t" style="left:132.20px;top:492.50px;font-size:13px;font-weight:bold;color:#00009a;transform:scaleX(1.0655);">Stnd Dev.</div>
<div class="t" style="left:113.00px;top:511.50px;font-size:13px;font-weight:bold;color:#000;transform:scaleX(1.0414);">1.32 um ( 59.6%)</div>
<div class="t" style="left:281.00px;top:492.50px;font-size:13px;font-weight:bold;color:#00009a;transform:scaleX(1.0204);">Mode</div>
<div class="t" style="left:270.00px;top:511.50px;font-size:13px;font-weight:bold;color:#000;transform:scaleX(1.0532);">1.51 um</div>
<div class="t" style="left:375.90px;top:492.50px;font-size:13px;font-weight:bold;color:#00009a;transform:scaleX(1.0504);">Median</div>
<div class="t" style="left:372.00px;top:511.50px;font-size:13px;font-weight:bold;color:#000;transform:scaleX(1.0657);">1.78 um</div>
<div class="t" style="left:478.20px;top:492.50px;font-size:13px;font-weight:bold;color:#00009a;transform:scaleX(0.9890);">Concentration</div>
<div class="t" style="left:478.20px;top:511.50px;font-size:13px;font-weight:bold;color:#000;transform:scaleX(1.0961);">20930750 #/ml</div>
<div class="t" style="left:659.80px;top:492.50px;font-size:13px;font-weight:bold;color:#00009a;transform:scaleX(1.0212);">Dilution Factor</div>
<div class="t" style="left:678.80px;top:511.50px;font-size:13px;font-weight:bold;color:#000;transform:scaleX(1.0610);">1.72</div>
<div class="t" style="left:13.00px;top:551.50px;font-size:13px;font-weight:bold;color:#c01818;">Caption:</div>
<div class="t" style="left:84.80px;top:551.50px;font-size:13px;font-weight:bold;color:#000;transform:scaleX(1.0252);">182</div>
<div class="t" style="left:5.20px;top:582.00px;font-size:11px;font-weight:normal;color:#000;transform:scaleX(0.9476);">For Help, press F1</div>
<div class="t" style="left:373.20px;top:582.00px;font-size:11px;font-weight:normal;color:#000;transform:scaleX(0.9578);">Read File: 182.1</div>
<div class="t" style="left:273.80px;top:58.20px;font-size:12.5px;font-weight:normal;color:#000;transform:scaleX(0.8029);">B/L</div>
<div class="t" style="left:318.77px;top:58.30px;font-size:12.5px;font-weight:normal;color:#000;transform:scaleX(0.8293);">E/S</div>
<div class="t" style="left:299.40px;top:55.60px;font-size:12px;font-weight:normal;color:#000;transform:scaleX(1.0091);">%</div>
<div class="t" style="left:484.20px;top:56.40px;font-size:15px;font-weight:bold;color:#fff;transform:scaleX(1.0545);">G</div>
</body></html>
